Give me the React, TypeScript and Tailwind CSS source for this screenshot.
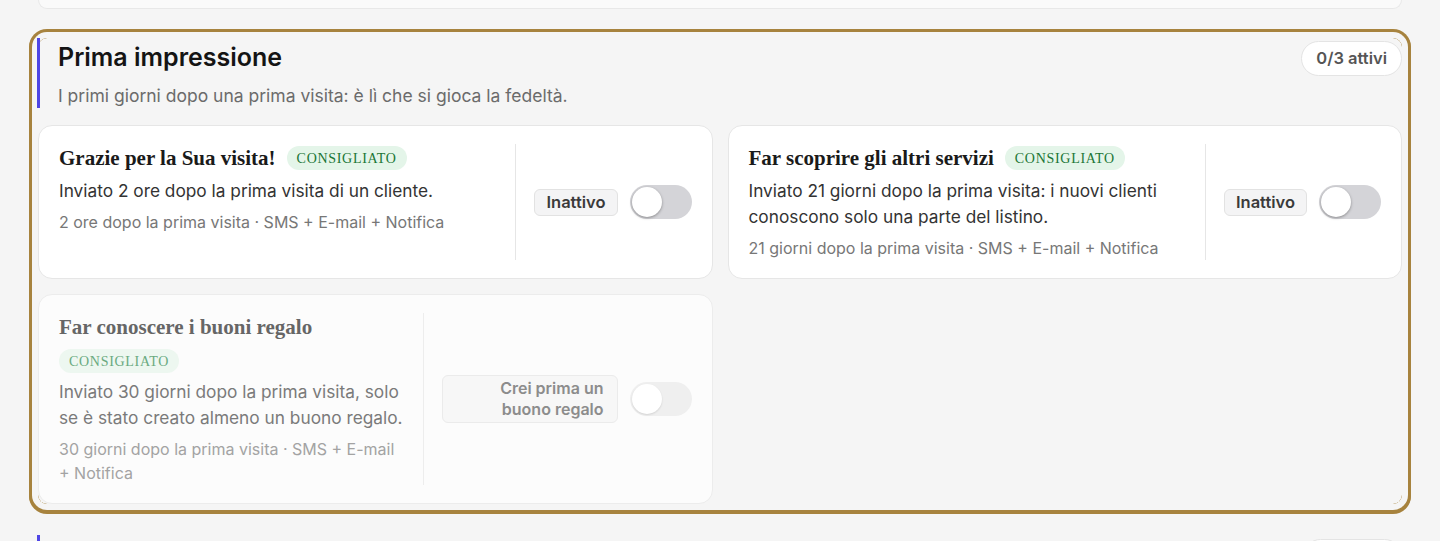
import React from "react";

const SANS = "font-['Inter','Noto_Sans',sans-serif]";
const SERIF = "font-['Liberation_Serif','Times_New_Roman',serif]";

function Toggle({ disabled = false }: { disabled?: boolean }) {
  return (
    <div
      className={`flex h-[34px] w-[62px] shrink-0 items-center rounded-full p-[2px] ${
        disabled ? "bg-[#efefef]" : "bg-[#d4d4d8]"
      }`}
    >
      <span
        className={`block h-[30px] w-[30px] rounded-full bg-white ${
          disabled ? "shadow-[0_1px_2px_rgba(0,0,0,0.12)]" : "shadow-[0_1px_3px_rgba(0,0,0,0.35)]"
        }`}
      />
    </div>
  );
}

function Badge({ muted = false }: { muted?: boolean }) {
  return (
    <span
      className={`${SERIF} inline-flex h-[24px] items-center rounded-full px-[10px] text-[14px] font-normal tracking-[0.7px] ${
        muted ? "bg-[#edf7f0] text-[#6aaa80]" : "bg-[#e4f5e9] text-[#1b7636]"
      }`}
    >
      CONSIGLIATO
    </span>
  );
}

type CardProps = {
  title: string;
  desc: string;
  meta: string;
  disabled?: boolean;
};

function Card({ title, desc, meta, disabled = false }: CardProps) {
  return (
    <div
      className={`flex gap-[16px] rounded-[14px] border px-5 py-[18px] ${
        disabled ? "border-[#ececec] bg-[#fcfcfc]" : "border-[#e6e6e6] bg-white"
      }`}
    >
      <div className="min-w-0 flex-1">
        <div className="flex flex-wrap items-center gap-x-[11px] gap-y-2">
          <h3
            className={`${SERIF} text-[21px] font-bold leading-[28px] ${
              disabled ? "text-[#666666]" : "text-[#1a1a1a]"
            }`}
          >
            {title}
          </h3>
          <Badge muted={disabled} />
        </div>
        <p
          className={`mt-[6px] text-[17.3px] leading-[26px] ${
            disabled ? "text-[#7a7a7a]" : "text-[#333333]"
          }`}
        >
          {desc}
        </p>
        <p
          className={`mt-[6px] text-[16px] leading-[24px] ${
            disabled ? "text-[#a3a3a3]" : "text-[#777777]"
          }`}
        >
          {meta}
        </p>
      </div>
      <div
        className={`flex shrink-0 items-center gap-3 self-stretch border-l pl-[18px] ${
          disabled ? "border-[#ededed]" : "border-[#e6e6e6]"
        }`}
      >
        {disabled ? (
          <div className="w-[176px] rounded-md border border-[#ebebeb] bg-[#f7f7f7] py-[2px] pr-[13px] text-right text-[16px] font-semibold leading-[21px] text-[#8c8c8c]">
            Crei prima un
            <br />
            buono regalo
          </div>
        ) : (
          <span className="inline-flex h-[27px] items-center rounded-md border border-[#e2e2e2] bg-[#f4f4f5] px-[11px] text-[16.5px] font-semibold text-[#3a3a3a]">
            Inattivo
          </span>
        )}
        <Toggle disabled={disabled} />
      </div>
    </div>
  );
}

export default function App() {
  return (
    <div className={`${SANS} min-h-screen overflow-hidden bg-[#f5f5f5] px-[38px]`}>
      {/* bottom of previous section card */}
      <div className="h-[9px] rounded-b-[14px] border border-t-0 border-[#e8e8e8] bg-[#fafafa]" />

      {/* highlighted section */}
      <section className="mt-[29px] rounded-[9px] shadow-[0_0_0_6px_#f5f5f5,0_0_0_9px_#a7833e,0_1px_0_9px_#a7833e]">
        <div className="flex items-start justify-between">
          <div className="-ml-px border-l-[3px] border-[#4f46e5] pl-[18px]">
            <h2 className="text-[25px] font-semibold leading-[38px] text-[#141414]">
              Prima impressione
            </h2>
            <p className="mt-[8px] text-[17.5px] leading-[24px] text-[#6b6b6b]">
              I primi giorni dopo una prima visita: è lì che si gioca la fedeltà.
            </p>
          </div>
          <span className="mt-[3px] inline-flex h-[35px] items-center rounded-full border border-[#e4e4e4] bg-white px-[14px] text-[16.5px] font-semibold text-[#555555]">
            0/3 attivi
          </span>
        </div>

        <div className="mt-[17px] grid grid-cols-2 gap-[15px]">
          <Card
            title="Grazie per la Sua visita!"
            desc="Inviato 2 ore dopo la prima visita di un cliente."
            meta="2 ore dopo la prima visita · SMS + E-mail + Notifica"
          />
          <Card
            title="Far scoprire gli altri servizi"
            desc="Inviato 21 giorni dopo la prima visita: i nuovi clienti conoscono solo una parte del listino."
            meta="21 giorni dopo la prima visita · SMS + E-mail + Notifica"
          />
          <Card
            title="Far conoscere i buoni regalo"
            desc="Inviato 30 giorni dopo la prima visita, solo se è stato creato almeno un buono regalo."
            meta="30 giorni dopo la prima visita · SMS + E-mail + Notifica"
            disabled
          />
        </div>
      </section>

      {/* next section header (cut off by the viewport) */}
      <section className="mt-[31px] flex items-start justify-between">
        <div className="-ml-px h-[70px] w-[200px] border-l-[3px] border-[#4f46e5]" />
        <div className="mt-[4px] h-[35px] w-[99px] rounded-full border border-[#e4e4e4] bg-white" />
      </section>
    </div>
  );
}
